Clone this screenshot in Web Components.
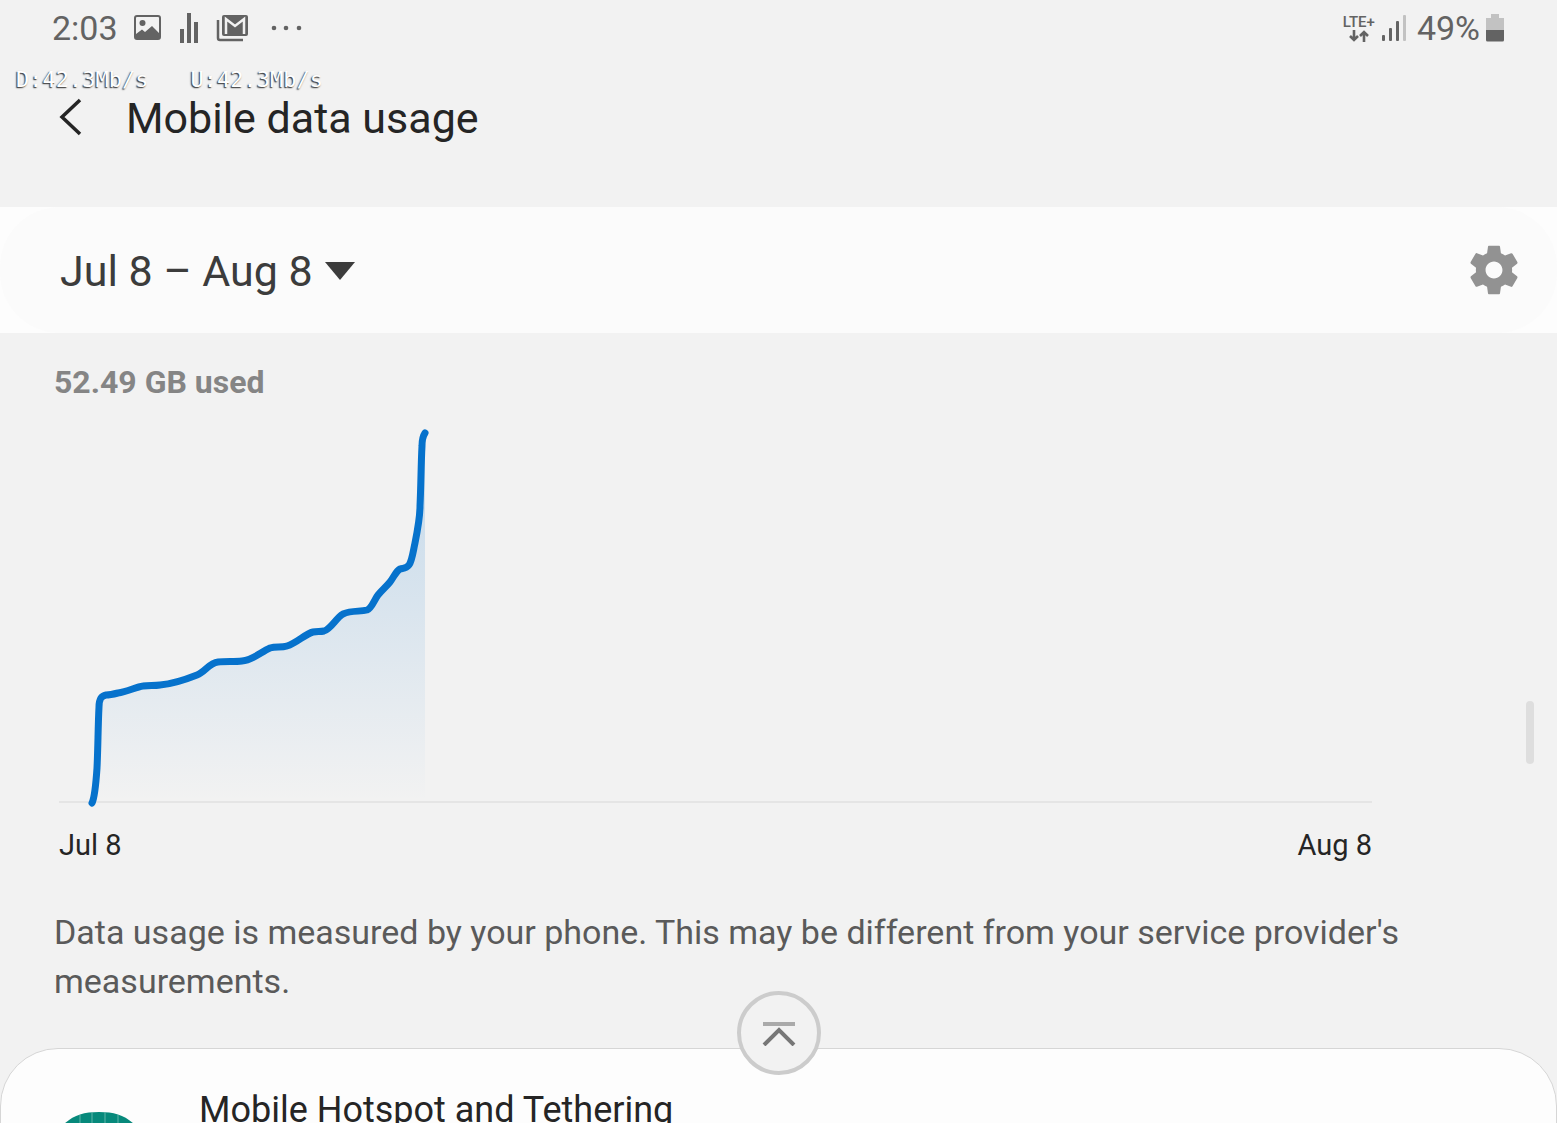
<!DOCTYPE html>
<html lang="en">
<head>
<meta charset="utf-8">
<meta name="viewport" content="width=device-width, initial-scale=1">
<title>Mobile data usage</title>
<style>
  :root {
    --page: #f2f2f2;
    --card: #fdfdfd;
    --ink: #252525;
    --muted: #636363;
    --accent: #0672cc;
    --gutter: 54px;
  }
  html, body {
    height: 100%;
  }
  body {
    margin: 0;
    background: var(--page);
    color: var(--ink);
    font-family: Roboto, "Noto Sans", sans-serif;
    overflow: hidden;
  }
</style>
</head>
<body>
<usage-screen>
  <status-bar slot="status" time="2:03" battery="49%"></status-bar>
  <speed-meter slot="overlay" down="42.3Mb/s" up="42.3Mb/s"></speed-meter>
  <page-header>Mobile data usage</page-header>
  <cycle-bar cycle="Jul 8 – Aug 8"></cycle-bar>
  <usage-chart from="Jul 8" to="Aug 8">52.49 GB used</usage-chart>
  <usage-note>Data usage is measured by your phone. This may be different from your service provider's measurements.</usage-note>
  <app-row>Mobile Hotspot and Tethering</app-row>
  <scroll-top slot="overlay"></scroll-top>
</usage-screen>

<script>
(function() {
  function define(name, html, setup) {
    const template = document.createElement("template");
    template.innerHTML = html;
    window.customElements.define(name, class extends HTMLElement {
      constructor() {
        super();
        this._shadowRoot = this.attachShadow({ mode: "open" });
        this._shadowRoot.appendChild(template.content.cloneNode(true));
      }
      connectedCallback() {
        if (setup) setup(this, this._shadowRoot);
      }
    });
  }

  define("usage-screen", `
    <style>
      :host {
        display: block;
        position: relative;
        height: 100vh;
        overflow: hidden;
      }
      main {
        display: flex;
        flex-direction: column;
      }
      .thumb {
        position: absolute;
        top: 701px;
        right: 23px;
        width: 8px;
        height: 63px;
        border-radius: 4px;
        background: #dedede;
      }
    </style>
    <slot name="status"></slot>
    <main><slot></slot></main>
    <div class="thumb"></div>
    <slot name="overlay"></slot>
  `);

  define("status-bar", `
    <style>
      :host {
        display: flex;
        justify-content: space-between;
        align-items: center;
        height: 56px;
        padding: 0 52px;
        box-sizing: border-box;
        color: var(--muted);
        font-size: 34px;
      }
      .group {
        display: flex;
        align-items: center;
      }
      .left { gap: 16px; }
      .right { gap: 5px; }
      svg { display: block; }
      .bars { margin: 0 6px 0 2px; }
      .net {
        display: flex;
        flex-direction: column;
        align-items: center;
        font-size: 15px;
        font-weight: 500;
        line-height: 16px;
      }
    </style>
    <div class="group left">
      <span id="time"></span>
      <svg width="28" height="28" viewBox="0 0 28 28">
        <rect x="1" y="2" width="25" height="23" rx="2" fill="none" stroke="#636363" stroke-width="2"/>
        <circle cx="8.500" cy="9" r="3" fill="#636363"/>
        <path d="M2 20L8 15.500L11 18L18 12L25 19V24H2Z" fill="#636363"/>
      </svg>
      <svg width="22" height="30" viewBox="0 0 22 30" fill="#636363">
        <path d="M2 16h4v14H2zM9 0h4v30H9zM16 9h4v21h-4z"/>
      </svg>
      <svg width="32" height="28" viewBox="0 0 32 28">
        <path d="M2 6V24Q2 26 4 26H27" fill="none" stroke="#636363" stroke-width="2.500"/>
        <rect x="6" y="1" width="26" height="21" rx="2" fill="#636363"/>
        <path d="M10 20V5L19 12L28 5V20" fill="none" stroke="#f2f2f2" stroke-width="2.500"/>
      </svg>
      <svg width="44" height="8" viewBox="0 0 44 8" fill="#636363">
        <circle cx="10" cy="4" r="2.300"/><circle cx="22" cy="4" r="2.300"/><circle cx="35" cy="4" r="2.300"/>
      </svg>
    </div>
    <div class="group right">
      <div class="net">
        <span>LTE+</span>
        <svg width="20" height="12" viewBox="0 0 20 12" fill="none" stroke="#636363" stroke-width="2.600">
          <path d="M5 0V10M1 6L5 10L9 6M15 12V2M11 6L15 2L19 6"/>
        </svg>
      </div>
      <svg class="bars" width="24" height="26" viewBox="0 0 24 26" fill="#636363">
        <rect x="0" y="20" width="3" height="6" rx="1"/>
        <rect x="7" y="13" width="3" height="13" rx="1"/>
        <rect x="14" y="6" width="3" height="20" rx="1"/>
        <rect x="21" y="0" width="3" height="26" rx="1" fill="#c2c2c2"/>
      </svg>
      <span id="battery"></span>
      <svg width="20" height="28" viewBox="0 0 20 28">
        <path d="M6 0h8v4h5v12H1V4h5z" fill="#c2c2c2"/>
        <path d="M1 16h18v10q0 1.500-1.500 1.500h-15Q1 27.500 1 26z" fill="#636363"/>
      </svg>
    </div>
  `, (el, root) => {
    root.querySelector("#time").textContent = el.getAttribute("time");
    root.querySelector("#battery").textContent = el.getAttribute("battery");
  });

  define("speed-meter", `
    <style>
      :host {
        position: absolute;
        top: 67px;
        left: 16px;
        display: flex;
        gap: 42px;
        color: #fff;
        font: 22px/26px "DejaVu Sans Mono", monospace;
        text-shadow: -1px 1px 1px #444, -1px 1px 2px #999;
        pointer-events: none;
      }
    </style>
    <span id="down"></span>
    <span id="up"></span>
  `, (el, root) => {
    root.querySelector("#down").textContent = "D:" + el.getAttribute("down");
    root.querySelector("#up").textContent = "U:" + el.getAttribute("up");
  });

  define("page-header", `
    <style>
      :host {
        display: flex;
        align-items: center;
        gap: 40px;
        height: 124px;
        padding: 0 var(--gutter) 27px;
      }
      button {
        padding: 0;
        border: 0;
        background: none;
      }
      svg { display: block; }
      h1 {
        margin: 0;
        font-size: 43px;
        font-weight: 400;
      }
    </style>
    <button aria-label="Navigate up">
      <svg width="32" height="40" viewBox="0 0 32 40" fill="none" stroke="#252525" stroke-width="3.500">
        <path d="M26 2L8 19L26 36"/>
      </svg>
    </button>
    <h1><slot></slot></h1>
  `);

  define("cycle-bar", `
    <style>
      :host {
        display: block;
        background: #fdfdfd;
      }
      .row {
        display: flex;
        align-items: center;
        justify-content: space-between;
        height: 126px;
        padding: 0 34px 0 60px;
        box-sizing: border-box;
        border-radius: 60px;
        background: #fbfbfb;
      }
      label {
        display: flex;
        align-items: center;
        gap: 12px;
        padding-top: 2px;
      }
      select {
        appearance: none;
        margin: 0;
        padding: 0;
        border: 0;
        background: none;
        color: #3c3c3c;
        font: 43px/52px Roboto, sans-serif;
      }
      button {
        padding: 0;
        border: 0;
        background: none;
      }
      svg { display: block; }
    </style>
    <div class="row">
      <label>
        <select aria-label="Billing cycle"><option></option></select>
        <svg width="30" height="20" viewBox="0 0 30 20"><path d="M0 1H30L15 19Z" fill="#3c3c3c"/></svg>
      </label>
      <button aria-label="Settings">
        <svg width="58" height="58" viewBox="0 0 24 24" fill="#929292">
          <path d="M19.430 12.980c.04-.32.07-.64.07-.98s-.03-.66-.07-.98l2.110-1.650c.19-.15.24-.42.12-.64l-2-3.460c-.12-.22-.39-.3-.61-.22l-2.490 1c-.52-.4-1.080-.73-1.690-.98l-.38-2.650C14.460 2.180 14.250 2 14 2h-4c-.25 0-.46.18-.49.42l-.38 2.650c-.61.25-1.170.59-1.690.98l-2.490-1c-.23-.09-.49 0-.61.22l-2 3.460c-.13.22-.07.49.12.64l2.110 1.650c-.04.32-.07.65-.07.98s.03.66.07.98l-2.110 1.650c-.19.15-.24.42-.12.64l2 3.460c.12.22.39.3.61.22l2.490-1c.52.4 1.080.73 1.690.98l.38 2.650c.03.24.24.42.49.42h4c.25 0 .46-.18.49-.42l.38-2.650c.61-.25 1.170-.59 1.690-.98l2.490 1c.23.09.49 0 .61-.22l2-3.460c.12-.22.07-.49-.12-.64l-2.110-1.650zM12 15.500c-1.930 0-3.500-1.570-3.500-3.500s1.570-3.500 3.500-3.500 3.500 1.570 3.500 3.500-1.570 3.500-3.500 3.500z"/>
        </svg>
      </button>
    </div>
  `, (el, root) => {
    root.querySelector("option").textContent = el.getAttribute("cycle");
  });

  define("usage-chart", `
    <style>
      :host {
        display: block;
        padding: 30px 185px 0 var(--gutter);
      }
      h2 {
        margin: 0;
        color: #858585;
        font-size: 32px;
        line-height: 38px;
        font-weight: 700;
      }
      figure {
        margin: 25px 0 0 5px;
      }
      svg {
        display: block;
        width: 100%;
        height: 380px;
        overflow: visible;
      }
      .line {
        fill: none;
        stroke: var(--accent);
        stroke-width: 7;
        stroke-linecap: round;
        stroke-linejoin: round;
        vector-effect: non-scaling-stroke;
      }
      figcaption {
        display: flex;
        justify-content: space-between;
        padding-top: 20px;
        font-size: 29px;
        line-height: 38px;
      }
    </style>
    <h2><slot></slot></h2>
    <figure>
      <svg viewBox="0 0 1313 380" preserveAspectRatio="none">
        <defs>
          <linearGradient id="fade" gradientUnits="userSpaceOnUse" x1="0" y1="7" x2="0" y2="376">
            <stop offset="0" stop-color="#0672cc" stop-opacity=".2"/>
            <stop offset="1" stop-color="#0672cc" stop-opacity="0"/>
          </linearGradient>
        </defs>
        <path d="M0 376H1313" stroke="#e5e5e5" stroke-width="2"/>
        <path id="area" fill="url(#fade)"/>
        <path id="line" class="line"/>
      </svg>
      <figcaption><span id="from"></span><span id="to"></span></figcaption>
    </figure>
  `, (el, root) => {
    const curve = "M33 377C36 371 37 357 38 342C39 322 39 300 40 281C40 273 42 270 47 269C51 269 55 268 59 267" +
      "C68 266 77 261 84 260C90 259 95 260 101 259C113 258 128 253 138 249C146 246 150 237 159 236" +
      "C167 235 175 236 183 235C194 234 202 226 211 222C217 220 222 222 228 220C238 217 246 208 254 206" +
      "C258 205 261 206 265 205C272 203 277 192 284 188C293 184 301 186 308 184C313 182 315 174 319 169" +
      "C323 164 327 161 331 156C335 151 337 145 341 143C344 142 347 143 350 139C353 135 354 126 356 117" +
      "C359 102 361 92 361 80C362 59 362 38 363 20C363 14 364 10 366 7";
    root.querySelector("#line").setAttribute("d", curve);
    root.querySelector("#area").setAttribute("d", curve + "V376H33Z");
    root.querySelector("#from").textContent = el.getAttribute("from");
    root.querySelector("#to").textContent = el.getAttribute("to");
  });

  define("usage-note", `
    <style>
      :host {
        display: block;
        padding: 44px var(--gutter) 42px;
        color: #5a5a5a;
        font-size: 34px;
        line-height: 49px;
      }
      p { margin: 0; }
    </style>
    <p><slot></slot></p>
  `);

  define("app-row", `
    <style>
      :host {
        display: flex;
        align-items: flex-start;
        gap: 60px;
        padding: 40px 58px;
        border: 1px solid #d6d6d6;
        border-radius: 58px 58px 0 0;
        background: var(--card);
        font-size: 36px;
        line-height: 42px;
      }
      svg {
        display: block;
        margin-top: 23px;
      }
    </style>
    <svg width="80" height="80" viewBox="0 0 80 80">
      <path d="M0 17C12 4 22 0 40 0S68 4 80 17V60C72 74 60 80 40 80S8 74 0 60Z" fill="#07897b"/>
      <path d="M21 3V77M33 0V80M46 0V80M59 3V77" stroke="#5fb5aa" stroke-width="1"/>
    </svg>
    <span><slot></slot></span>
  `);

  define("scroll-top", `
    <style>
      :host {
        position: absolute;
        right: 0;
        bottom: 48px;
        left: 0;
        display: flex;
        justify-content: center;
        pointer-events: none;
      }
      button {
        display: grid;
        place-items: center;
        width: 84px;
        height: 84px;
        padding: 0;
        border: 4px solid #ccc;
        border-radius: 50%;
        background: var(--page);
        pointer-events: auto;
      }
    </style>
    <button aria-label="Scroll to top">
      <svg width="34" height="26" viewBox="0 0 34 26" fill="none">
        <path d="M1 4H33" stroke="#aaa" stroke-width="4"/>
        <path d="M2 25L17 10L32 25" stroke="#777" stroke-width="4"/>
      </svg>
    </button>
  `);
})();
</script>
</body>
</html>
